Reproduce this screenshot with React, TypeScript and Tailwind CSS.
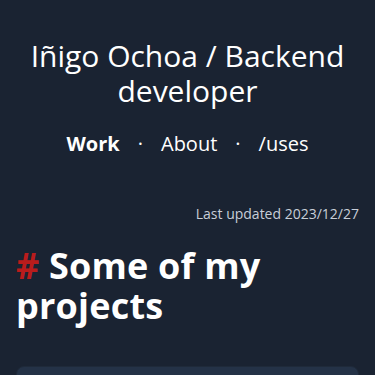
import React from 'react';

export default function App() {
  return (
    <div className="min-h-[375px] bg-[#1a2332] px-4 text-white" style={{ fontFamily: '"Open Sans", sans-serif' }}>
      <header className="pt-[38px] text-center">
        <h1 className="text-[30px] leading-[35px] font-normal">Iñigo Ochoa / Backend developer</h1>
        <nav className="mt-[22px] flex items-center justify-center gap-[14px] text-[20px] leading-[28px]">
          <a className="font-bold">Work</a>
          <span className="px-[4px]">·</span>
          <a>About</a>
          <span className="px-[4px]">·</span>
          <a>/uses</a>
        </nav>
      </header>

      <p className="mt-[46px] text-right text-[14px] leading-[20px] text-[#c8ced8]">Last updated 2023/12/27</p>

      <h2 className="mt-[22px] text-[36px] leading-[40px] font-bold tracking-[0.2px]">
        <span className="text-[#b91c1c]">#</span> Some of my projects
      </h2>

      <div className="mt-[40px] h-[60px] rounded-lg border border-[#1f2a3a] bg-[#243247]" />
    </div>
  );
}
